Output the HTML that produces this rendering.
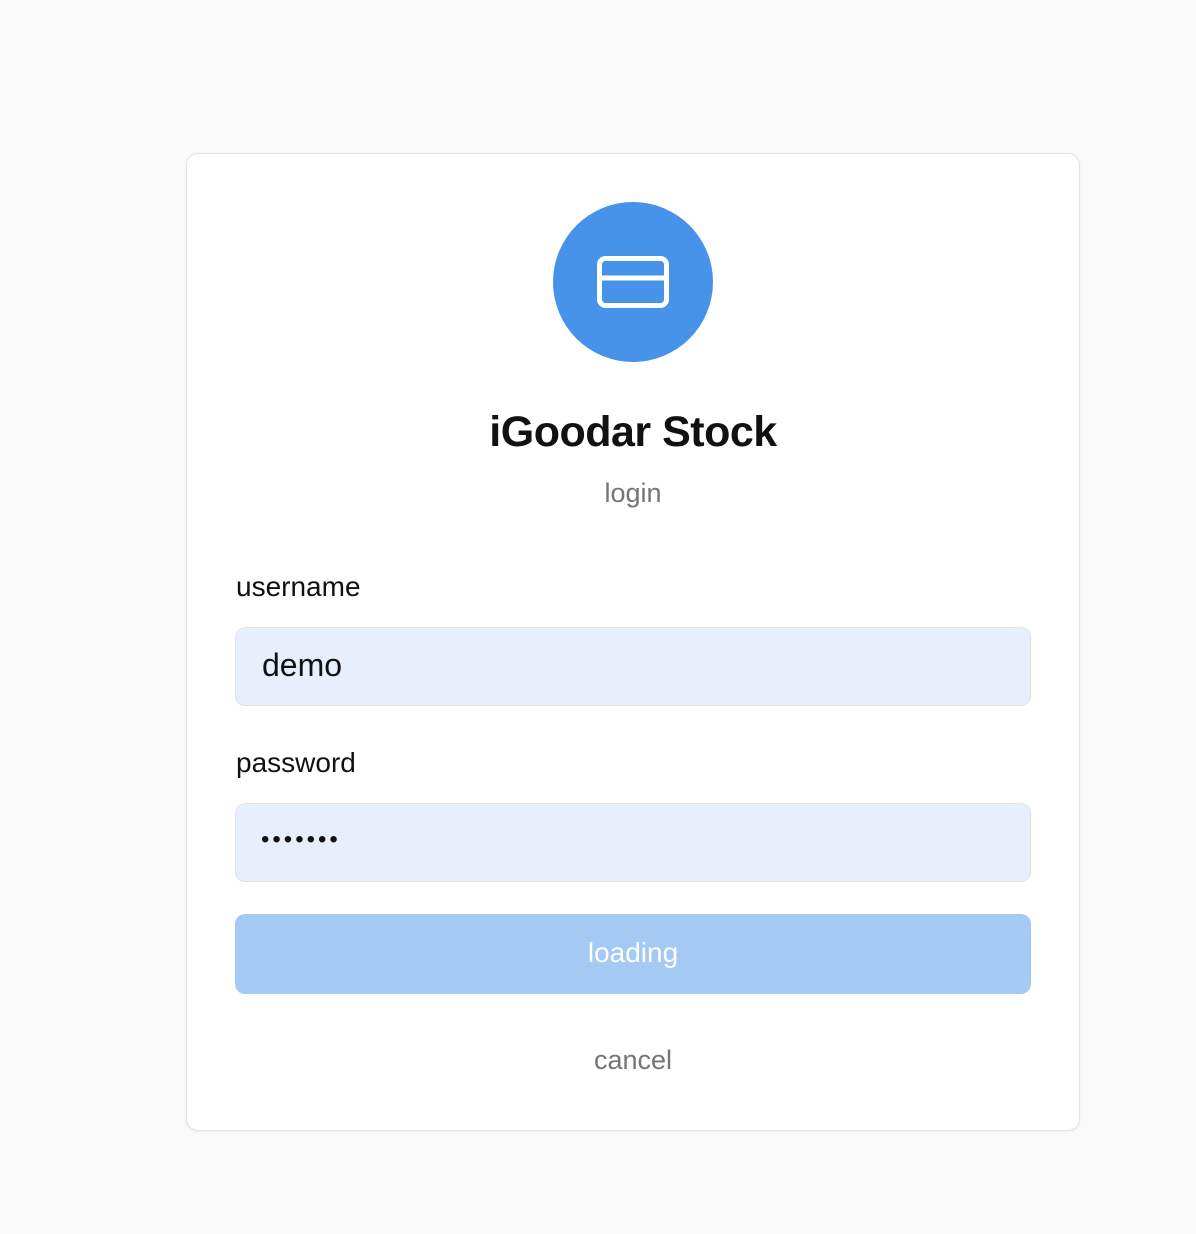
<!DOCTYPE html>
<html><head><meta charset="utf-8"><style>
html,body{margin:0;padding:0;}
body{width:1196px;height:1234px;background:#f9f9f9;position:relative;font-family:"Liberation Sans",sans-serif;overflow:hidden;}
.card{position:absolute;left:186px;top:153px;width:892px;height:976px;background:#fff;border:1px solid #e3e3e3;border-radius:12px;box-shadow:0 1px 2px rgba(0,0,0,0.05);}
.circle{position:absolute;left:553px;top:202px;width:160px;height:160px;border-radius:50%;background:#4893ea;}
.t{position:absolute;left:35px;width:1196px;text-align:center;white-space:nowrap;}
.lbl{position:absolute;left:236px;font-size:28px;color:#111;white-space:nowrap;}
.inp{position:absolute;left:235px;width:794px;height:77px;background:#e8effc;border:1px solid #e2e2e2;border-radius:10px;}
.btn{position:absolute;left:235px;top:914px;width:796px;height:80px;background:#a3c9f4;border-radius:10px;}
</style></head><body>
<div class="card"></div>
<div class="circle">
<svg width="160" height="160" viewBox="0 0 160 160"><rect x="46.5" y="56.5" width="67" height="47" rx="6" fill="none" stroke="#fff" stroke-width="5"/><line x1="46" y1="76" x2="114" y2="76" stroke="#fff" stroke-width="5"/></svg>
</div>
<div class="t" style="top:408px;font-size:43px;font-weight:bold;color:#111;letter-spacing:-0.5px;">iGoodar Stock</div>
<div class="t" style="top:478px;font-size:27px;color:#757575;">login</div>
<div class="lbl" style="top:571px;">username</div>
<div class="inp" style="top:627px;"></div>
<div class="lbl" style="top:647px;left:262px;font-size:32px;">demo</div>
<div class="lbl" style="top:747px;">password</div>
<div class="inp" style="top:803px;"></div>
<div class="lbl" style="top:826px;left:261px;font-size:24px;letter-spacing:3px;">•••••••</div>
<div class="btn"></div>
<div class="t" style="top:937px;font-size:28px;color:#fff;">loading</div>
<div class="t" style="top:1045px;font-size:27px;color:#757575;">cancel</div>
</body></html>
